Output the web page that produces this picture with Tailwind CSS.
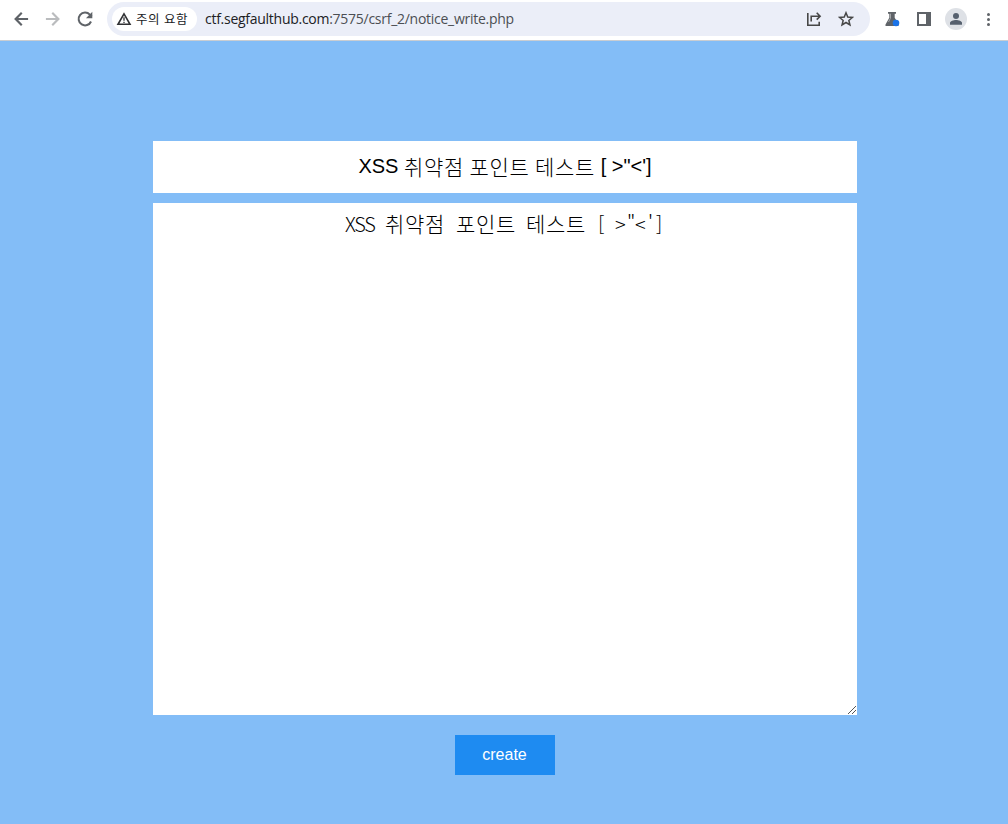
<!DOCTYPE html>
<html lang="ko">

<head>
    <meta charset="UTF-8">
    <meta name="viewport" content="width=device-width, initial-scale=1.0">
    <title>Notice Write</title>
    <script src="https://cdn.jsdelivr.net/npm/@tailwindcss/browser@4"></script>
</head>

<body class="h-screen overflow-hidden flex flex-col bg-[#83bdf7] font-['Liberation_Sans','Noto_Sans_CJK_KR',sans-serif]">
    <!-- browser toolbar -->
    <header class="h-[41px] shrink-0 bg-white border-b border-[#c9cdd2] flex items-start">
        <nav class="flex h-[38px] w-[107px] items-center gap-3 pl-[11px] text-[#5f6368]">
            <svg class="size-5" viewBox="0 0 24 24" fill="currentColor">
                <path d="M20.5 10.7v2.6H8.6l5.2 5.2-1.8 1.8L3.7 12 12 3.7l1.8 1.8-5.2 5.2z" />
            </svg>
            <svg class="size-5 text-[#babcbe]" viewBox="0 0 24 24" fill="currentColor">
                <path d="M3.5 10.7v2.6h11.9l-5.2 5.2 1.8 1.8L20.3 12 12 3.7l-1.8 1.8 5.2 5.2z" />
            </svg>
            <svg class="size-5" viewBox="0 0 24 24" fill="none" stroke="currentColor" stroke-width="2.5">
                <path d="M19.2 15A7.7 7.7 0 1 1 17.8 6.8L20 9" />
                <path d="M20.8 3.3v7.7h-7.7z" fill="currentColor" stroke="none" />
            </svg>
        </nav>

        <!-- address bar -->
        <div class="mt-0.5 flex h-[34px] w-[763px] items-center rounded-full bg-[#ebeef8] pl-[5px] pr-4">
            <div class="flex h-6 w-[85px] items-center rounded-full bg-white pl-[4px]">
                <svg class="size-4" viewBox="0 0 16 16" fill="none" stroke="#303134" stroke-width="1.6">
                    <path d="M8 2.8 14 13.3H2z" />
                    <path d="M8 6.2v3.6M8 10.8v1.3" stroke-width="1.3" />
                </svg>
                <span class="ml-[4px] whitespace-nowrap pb-px text-[12.5px] leading-6 tracking-[0.5px] text-[#202124] font-['Noto_Sans_CJK_KR',sans-serif]">주의 요함</span>
            </div>
            <div class="ml-[8px] whitespace-nowrap text-[14px] leading-[34px] tracking-[-0.27px] text-[#202124] font-['Open_Sans',sans-serif]"><span>ctf.segfaulthub.com</span><span class="text-[#4b4e53]">:7575/csrf_2/notice_write.php</span></div>
            <div class="ml-auto flex items-center gap-4 text-[#474747]">
                <svg class="size-4" viewBox="0 0 16 16" fill="none" stroke="currentColor" stroke-width="1.6">
                    <path d="M1.8 2v12.2h11.4v-3.4" />
                    <path d="M5.2 10.5V5.2h8.6M10.7 1.8l3.4 3.4-3.4 3.4" />
                </svg>
                <svg class="size-4" viewBox="0 0 16 16" fill="none" stroke="currentColor" stroke-width="1.5">
                    <path d="M8 1.8l1.75 4.3 4.65.35-3.55 3 1.1 4.5L8 11.5l-3.95 2.45 1.1-4.5-3.55-3 4.65-.35z" />
                </svg>
            </div>
        </div>

        <!-- extensions, side panel, profile, menu -->
        <div class="flex h-[38px] items-center pl-[14px]">
            <svg class="size-4" viewBox="0 0 16 16">
                <path d="M4 1h8v1.7h-1.3v4L14.5 13v2h-13v-1.5L5.3 6.700v-4H4z" fill="#5f6368" />
                <path d="M6.5 2.7v4.5L4.5 11" stroke="#a3a6a9" fill="none" />
                <circle cx="12" cy="12" r="3.3" fill="#1a73e8" />
            </svg>
            <svg class="ml-[17px] size-[14px]" viewBox="0 0 14 14">
                <path d="M0 0h14v14H0zM2 2v10h7V2z" fill="#5f6368" fill-rule="evenodd" />
            </svg>
            <div class="ml-[14px] flex size-[22px] items-center justify-center rounded-full bg-[#dee1e6]">
                <svg class="size-[14px]" viewBox="0 0 14 14" fill="#56606e">
                    <circle cx="7" cy="4" r="3" />
                    <path d="M1 12.8v-1.7c0-1.9 3.5-3 6-3s6 1.1 6 3v1.7z" />
                </svg>
            </div>
            <svg class="ml-3 size-[18px]" viewBox="0 0 18 18" fill="#5f6368">
                <circle cx="9.5" cy="4.5" r="1.5" />
                <circle cx="9.5" cy="9.5" r="1.5" />
                <circle cx="9.5" cy="14.5" r="1.5" />
            </svg>
        </div>
    </header>

    <!-- write form -->
    <main class="flex flex-col pt-[100px] pl-[153px] text-black">
        <div class="flex h-[52px] w-[704px] items-center justify-center bg-white pb-0.5 text-[20px] whitespace-pre"><span>XSS </span><span class="font-light text-[21px] leading-7 pb-px tracking-[0.68px] font-['Noto_Sans_CJK_KR',sans-serif]">취약점</span><span> </span><span class="font-light text-[21px] leading-7 pb-px tracking-[0.68px] font-['Noto_Sans_CJK_KR',sans-serif]">포인트</span><span> </span><span class="font-light text-[21px] leading-7 pb-px tracking-[0.68px] font-['Noto_Sans_CJK_KR',sans-serif]">테스트</span><span> [ &gt;"&lt;']</span></div>

        <div class="relative mt-[10px] flex h-[512px] w-[704px] items-start justify-center bg-white pt-[6px] text-[20px] leading-[30px] font-light whitespace-pre font-['Noto_Sans_CJK_KR',sans-serif]">
            <div class="flex">
                <span class="w-10 tracking-[-1.3px]">XSS</span>
                <span class="w-[71px] text-[21px] leading-7 tracking-[0.68px]">취약점</span>
                <span class="w-[70px] text-[21px] leading-7 tracking-[0.68px]">포인트</span>
                <span class="w-[70px] text-[21px] leading-7 tracking-[0.68px]">테스트</span>
                <span class="w-[19px] pl-[2px]">[</span>
                <span class="w-2.5">&gt;</span>
                <span class="w-2.5 pl-[2px]">"</span>
                <span class="w-2.5">&lt;</span>
                <span class="w-2.5 pl-[3px]">'</span>
                <span class="w-2.5 pl-[1px]">]</span>
            </div>
            <svg class="absolute right-0 bottom-0 size-[10px]" viewBox="0 0 10 10" fill="none" stroke="#555" stroke-width="1">
                <path d="M1 9l8-8M5 9l4-4" />
            </svg>
        </div>

        <button class="mt-5 ml-[302px] h-10 w-[100px] bg-[#1e8bf1] pr-px text-base text-white">create</button>
    </main>
</body>

</html>
